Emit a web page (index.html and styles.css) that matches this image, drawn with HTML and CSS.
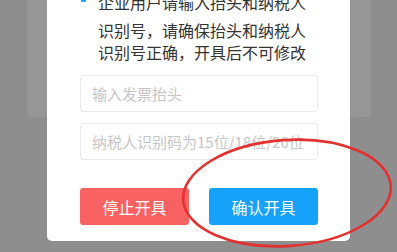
FILE: index.html
```
<!DOCTYPE html>
<html lang="zh">
<head>
<meta charset="utf-8">
<link rel="stylesheet" href="styles.css">
</head>
<body>
<div class="backdrop-layer"></div>
<div class="dialog">
  <div class="notice">
    <span class="bullet"></span>
    <p class="notice-text"><span class="first-line">企业用户请输入抬头和纳税人</span>识别号，请确保抬头和纳税人<br>识别号正确，开具后不可修改</p>
  </div>
  <input class="field" type="text" placeholder="输入发票抬头">
  <input class="field field-second" type="text" placeholder="纳税人识别码为15位/18位/20位">
  <div class="actions">
    <button class="btn btn-stop">停止开具</button>
    <button class="btn btn-confirm">确认开具</button>
  </div>
</div>
<svg class="annotation" width="397" height="252" viewBox="0 0 397 252">
  <ellipse cx="287" cy="193" rx="104" ry="53" transform="rotate(-4 287 193)" fill="none" stroke="#e2312e" stroke-width="2.6"/>
</svg>
</body>
</html>
```
FILE: styles.css
```
html, body {
  margin: 0;
  padding: 0;
}
body {
  width: 397px;
  height: 252px;
  background: #8e8e8e;
  overflow: hidden;
  position: relative;
  font-family: "Noto Sans CJK SC", "Noto Sans", sans-serif;
}
.backdrop-layer {
  position: absolute;
  left: 27px;
  top: -10px;
  width: 344px;
  height: 127px;
  background: #969696;
  border-radius: 4px;
}
.dialog {
  position: absolute;
  left: 47px;
  top: -20px;
  width: 303px;
  box-sizing: border-box;
  padding: 17px 32px 16px 33px;
  background: #fff;
  border-radius: 5px;
  display: flex;
  flex-direction: column;
}
.notice {
  display: flex;
  align-items: flex-start;
  margin-top: -6px;
}
.bullet {
  width: 5px;
  height: 5px;
  background: #1aa3ff;
  border-radius: 1px;
  margin: 6px 12px 0 1px;
  flex: none;
}
.notice-text {
  margin: 0;
  font-size: 16px;
  line-height: 22px;
  color: #333;
  white-space: nowrap;
}
.first-line {
  display: block;
  margin-bottom: 6px;
}
.field {
  margin: 12px 0 0;
  height: 37px;
  box-sizing: border-box;
  border: 1px solid #ebebeb;
  border-radius: 3px;
  padding: 0 12px 0 11px;
  font-family: inherit;
  font-size: 15px;
  color: #333;
  outline: none;
  width: 100%;
}
.field-second {
  margin-top: 11px;
}
.field::placeholder {
  color: #c6c6c6;
}
.actions {
  margin-top: 28px;
  display: flex;
  justify-content: space-between;
}
.btn {
  width: 109px;
  height: 37px;
  border: none;
  border-radius: 3px;
  color: #fff;
  font-family: inherit;
  font-size: 16px;
  padding: 0;
}
.btn-stop {
  background: #f86262;
}
.btn-confirm {
  background: #16a2fb;
}
.annotation {
  position: absolute;
  left: 0;
  top: 0;
  pointer-events: none;
}
```
